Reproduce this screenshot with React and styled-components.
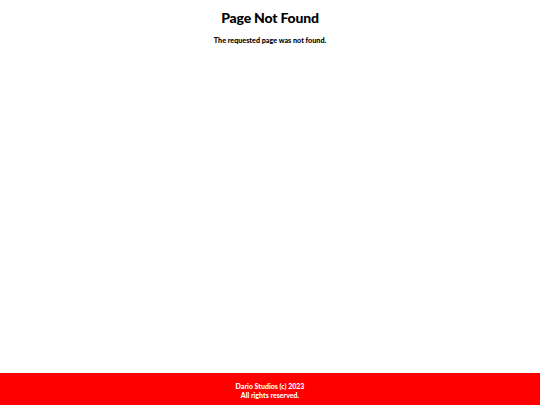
import React from "react";
import styled, { createGlobalStyle } from "styled-components";

const Global = createGlobalStyle`
  html, body { margin: 0; padding: 0; height: 100%; }
  body { font-family: "Lato", "DejaVu Sans", sans-serif; background: #fff; color: #000; }
  #root { min-height: 100%; }
`;

const Page = styled.div`
  min-height: 405px;
  display: flex;
  flex-direction: column;
`;

const Main = styled.main`
  flex: 1;
  display: flex;
  flex-direction: column;
  align-items: center;
  padding-top: 9px;
`;

const Title = styled.h1`
  margin: 0;
  font-size: 14px;
  font-weight: 900;
  line-height: 18px;
  letter-spacing: -0.2px;
`;

const Message = styled.p`
  margin: 9px 0 0;
  font-size: 7.2px;
  font-weight: 900;
  line-height: 10px;
`;

const Footer = styled.footer`
  background: #ff0000;
  color: #fff;
  height: 32px;
  box-sizing: border-box;
  padding-top: 9px;
  display: flex;
  flex-direction: column;
  align-items: center;
  font-size: 7px;
  font-weight: 900;
  line-height: 9px;
`;

const FooterLine = styled.span`
  display: block;
`;

export default function App() {
  return (
    <>
      <Global />
      <Page>
        <Main>
          <Title>Page Not Found</Title>
          <Message>The requested page was not found.</Message>
        </Main>
        <Footer>
          <FooterLine>Dario Studios (c) 2023</FooterLine>
          <FooterLine>All rights reserved.</FooterLine>
        </Footer>
      </Page>
    </>
  );
}
